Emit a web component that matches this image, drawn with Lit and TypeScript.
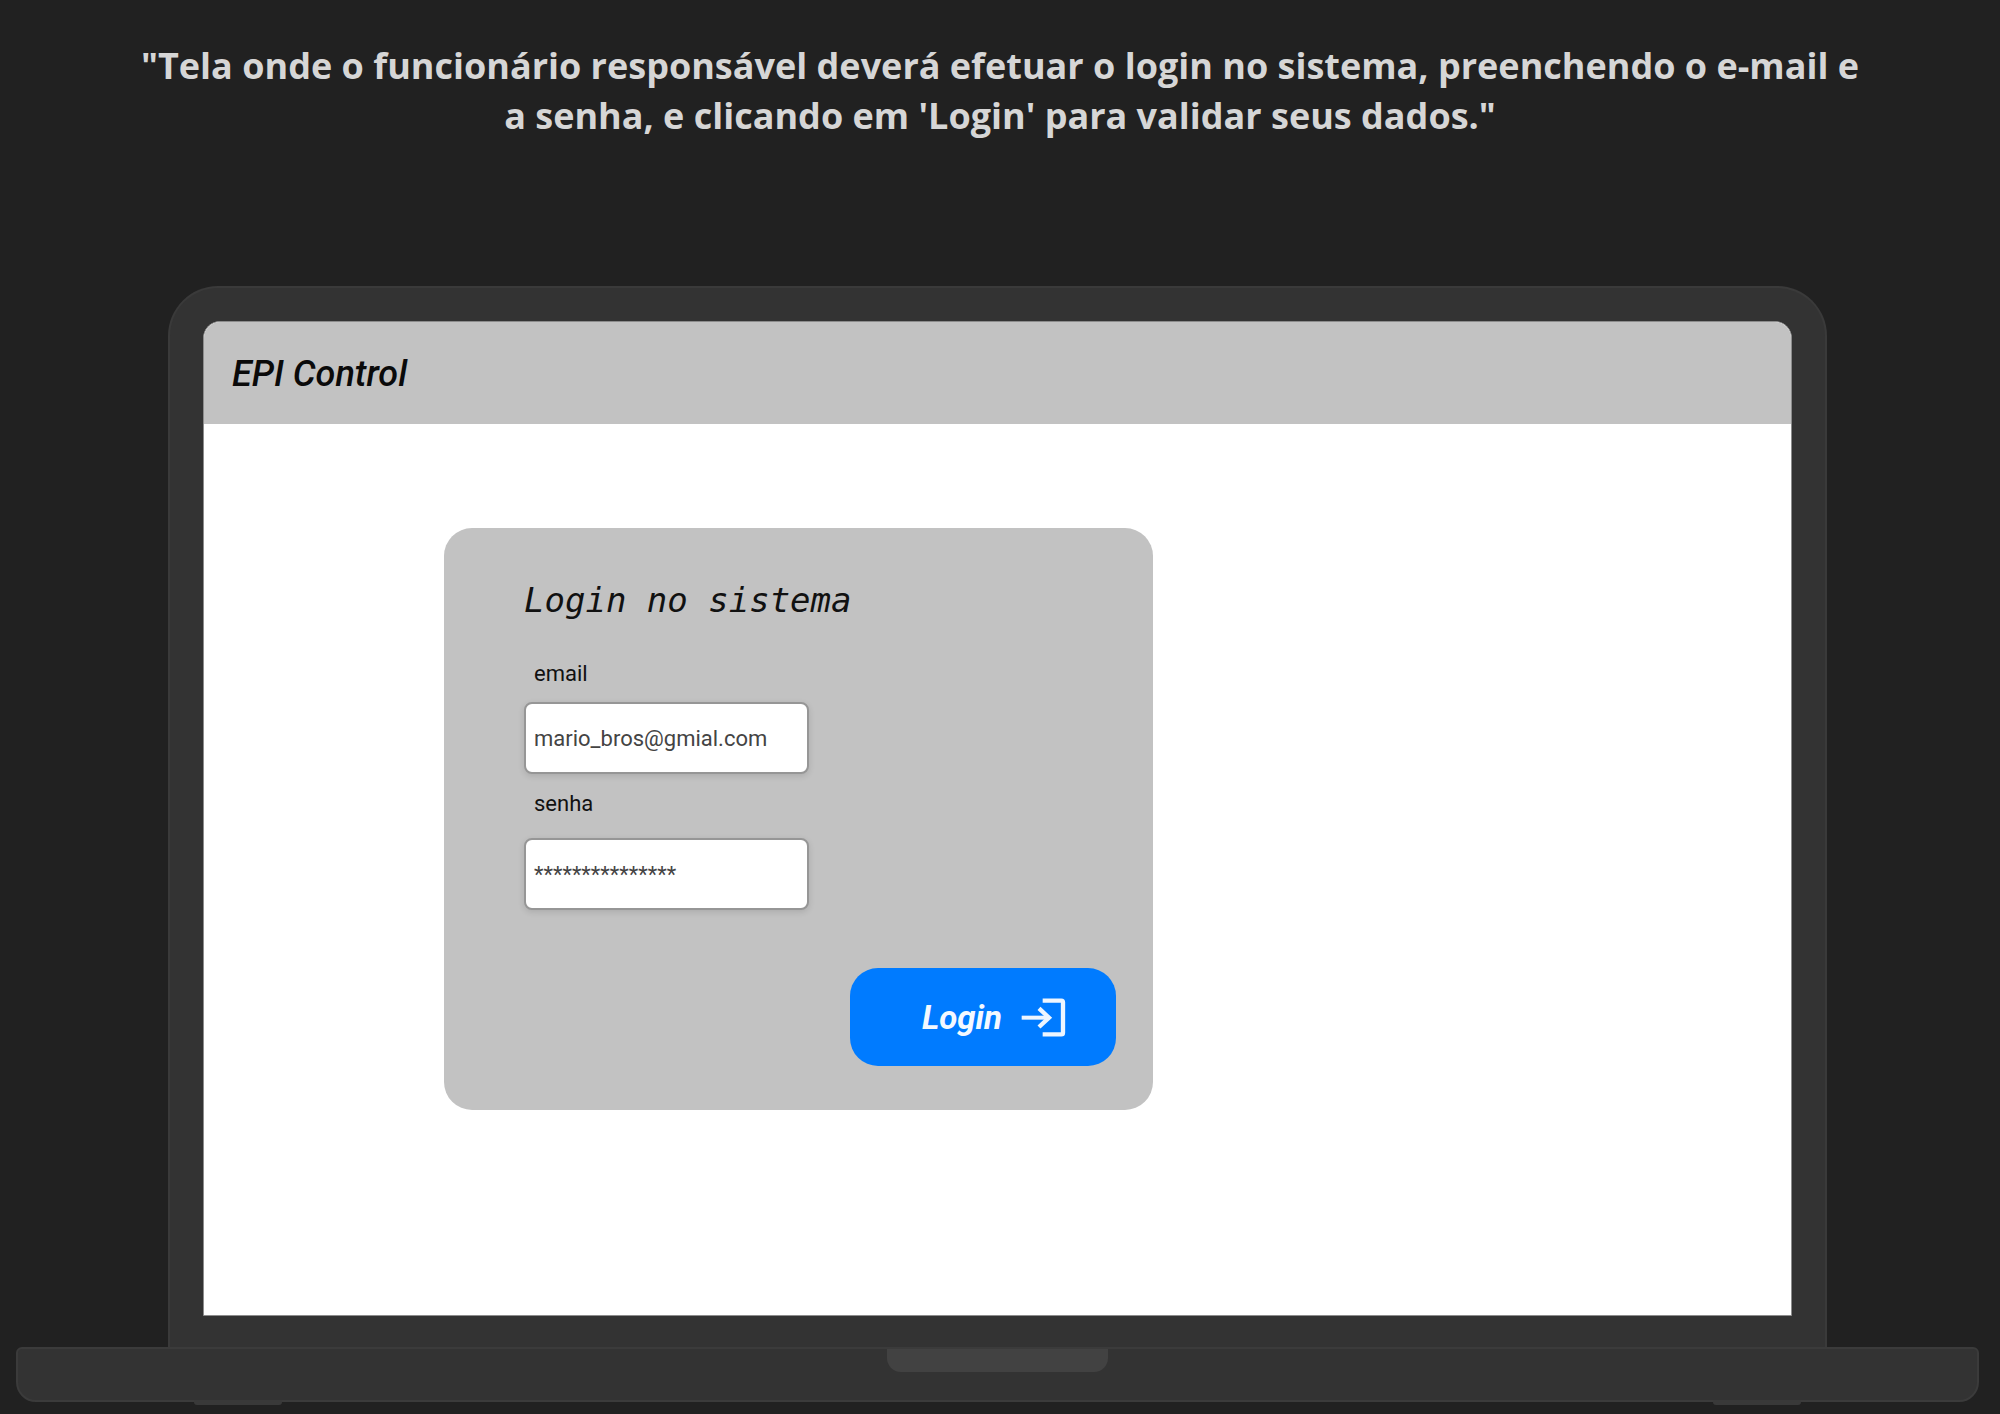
import { LitElement, html, css } from "lit";
import { customElement, state } from "lit/decorators.js";

@customElement("login-card")
class LoginCard extends LitElement {
  static styles = css`
    :host {
      display: block;
      max-width: 100%;
    }
    .card {
      box-sizing: border-box;
      width: 709px;
      max-width: 100%;
      padding: 48px 37px 44px 80px;
      border-radius: 28px;
      background: #c2c2c2;
      color: #111;
      font-family: Roboto, sans-serif;
      display: flex;
      flex-direction: column;
      align-items: flex-start;
    }
    .title {
      margin: 0 0 36px;
      font: italic 400 34px/48px "DejaVu Sans Mono", monospace;
    }
    .label {
      padding-left: 10px;
      font-size: 22px;
      line-height: 28px;
      margin-bottom: 14px;
    }
    .field + .label {
      margin-top: 16px;
      margin-bottom: 20px;
    }
    .field {
      box-sizing: border-box;
      width: 285px;
      max-width: 100%;
      height: 72px;
      padding: 0 8px;
      border: 2px solid #969696;
      border-radius: 8px;
      background: #fff;
      color: #444;
      font: 400 22px/28px Roboto, sans-serif;
      box-shadow: 0 2px 6px rgba(0, 0, 0, 0.12);
      outline: none;
    }
    .submit {
      align-self: flex-end;
      display: flex;
      align-items: center;
      justify-content: flex-end;
      gap: 18px;
      width: 266px;
      height: 98px;
      margin-top: 58px;
      padding: 2px 49px 0 0;
      border: 0;
      border-radius: 28px;
      background: #007bff;
      color: #f4f9ff;
      font: italic 700 33px/40px Roboto, sans-serif;
      cursor: pointer;
    }
    .icon {
      width: 47px;
      height: 42px;
      fill: none;
      stroke: #eef6ff;
    }
  `;

  @state() private email = "mario_bros@gmial.com";
  @state() private senha = "*".repeat(15);

  render() {
    return html`
      <form class="card" @submit=${(e: Event) => e.preventDefault()}>
        <h2 class="title">Login no sistema</h2>
        <label class="label" for="email">email</label>
        <input
          class="field"
          id="email"
          type="email"
          .value=${this.email}
          @input=${(e: Event) => (this.email = (e.target as HTMLInputElement).value)}
        />
        <label class="label" for="senha">senha</label>
        <input
          class="field"
          id="senha"
          type="text"
          .value=${this.senha}
          @input=${(e: Event) => (this.senha = (e.target as HTMLInputElement).value)}
        />
        <button class="submit" type="submit">
          Login
          <svg class="icon" viewBox="0 0 141 126" aria-hidden="true">
            <path d="M5 62H88" stroke-width="12" />
            <path d="M57 34L87 62L57 90" stroke-width="13" />
            <path d="M68 11H124Q129 11 129 16V107Q129 112 124 112H68" stroke-width="13" />
          </svg>
        </button>
      </form>
    `;
  }
}

@customElement("app-root")
class AppRoot extends LitElement {
  static styles = css`
    :host {
      display: block;
    }
    .page {
      box-sizing: border-box;
      min-height: 100vh;
      padding: 41px 0 12px;
      background: #212121;
      display: flex;
      flex-direction: column;
    }
    .caption {
      max-width: 1740px;
      margin: 0 auto 145px;
      color: #d6d6d6;
      font: 700 36px/50px "Open Sans", sans-serif;
      text-align: center;
    }
    .laptop {
      flex: 1;
      display: flex;
      flex-direction: column;
      padding: 0 21px 0 16px;
    }
    .lid {
      box-sizing: border-box;
      flex: 1;
      display: flex;
      margin: 0 152px;
      padding: 33px 33px 31px;
      border: 2px solid #3a3a3a;
      border-bottom: 0;
      border-radius: 50px 50px 0 0;
      background: #333;
    }
    .screen {
      box-sizing: border-box;
      flex: 1;
      min-width: 0;
      display: flex;
      flex-direction: column;
      border: 1px solid #8c8c8c;
      border-radius: 17px 17px 0 0;
      background: #fff;
      overflow: hidden;
    }
    .bar {
      box-sizing: border-box;
      height: 102px;
      padding: 2px 28px 0;
      display: flex;
      align-items: center;
      background: #c2c2c2;
    }
    .brand {
      margin: 0;
      color: #0a0a0a;
      font: italic 500 36px/44px Roboto, sans-serif;
    }
    .content {
      display: flex;
      justify-content: flex-start;
      padding: 104px 0 104px 240px;
    }
    .base {
      position: relative;
      box-sizing: border-box;
      height: 55px;
      border: 2px solid #3b3b3b;
      border-radius: 6px 6px 20px 20px;
      background: #333;
    }
    .notch {
      width: 221px;
      height: 23px;
      margin: 0 auto;
      border-radius: 0 0 14px 14px;
      background: #424242;
    }
    .foot {
      position: absolute;
      top: 100%;
      width: 88px;
      height: 5px;
      border-radius: 0 0 3px 3px;
      background: #393939;
    }
    .left {
      left: 9%;
    }
    .right {
      right: 9%;
    }
  `;

  render() {
    return html`
      <main class="page">
        <p class="caption">
          "Tela onde o funcionário responsável deverá efetuar o login no sistema, preenchendo o e-mail e
          a senha, e clicando em 'Login' para validar seus dados."
        </p>
        <div class="laptop">
          <div class="lid">
            <div class="screen">
              <header class="bar"><h1 class="brand">EPI Control</h1></header>
              <div class="content"><login-card></login-card></div>
            </div>
          </div>
          <div class="base">
            <div class="notch"></div>
            <div class="foot left"></div>
            <div class="foot right"></div>
          </div>
        </div>
      </main>
    `;
  }
}
